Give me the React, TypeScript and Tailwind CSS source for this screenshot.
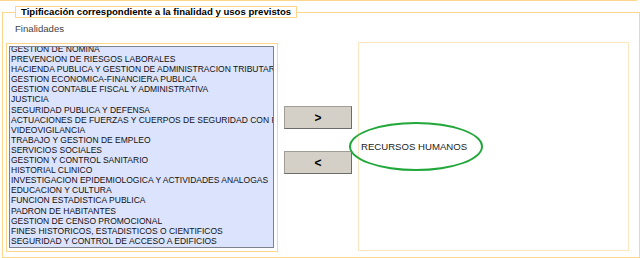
import React from "react";

const items = [
  "GESTION DE NOMINA",
  "PREVENCION DE RIESGOS LABORALES",
  "HACIENDA PUBLICA Y GESTION DE ADMINISTRACION TRIBUTARIA",
  "GESTION ECONOMICA-FINANCIERA PUBLICA",
  "GESTION CONTABLE FISCAL Y ADMINISTRATIVA",
  "JUSTICIA",
  "SEGURIDAD PUBLICA Y DEFENSA",
  "ACTUACIONES DE FUERZAS Y CUERPOS DE SEGURIDAD CON FINES POLICIALES",
  "VIDEOVIGILANCIA",
  "TRABAJO Y GESTION DE EMPLEO",
  "SERVICIOS SOCIALES",
  "GESTION Y CONTROL SANITARIO",
  "HISTORIAL CLINICO",
  "INVESTIGACION EPIDEMIOLOGICA Y ACTIVIDADES ANALOGAS",
  "EDUCACION Y CULTURA",
  "FUNCION ESTADISTICA PUBLICA",
  "PADRON DE HABITANTES",
  "GESTION DE CENSO PROMOCIONAL",
  "FINES HISTORICOS, ESTADISTICOS O CIENTIFICOS",
  "SEGURIDAD Y CONTROL DE ACCESO A EDIFICIOS",
];

export default function App() {
  return (
    <div className="w-[640px] h-[258px] bg-white overflow-hidden font-['Liberation_Sans',Arial,sans-serif] text-black">
      <div className="w-[637px] h-px bg-[#fcd68c]" />
      <fieldset className="ml-[2px] mt-[5px] w-[638px] h-[252px] border border-[#fcd68c] pl-[3px] pt-[5px] m-0">
        <legend className="ml-[9px] border border-[#fcd68c] bg-white px-[5px] text-[9.6px] leading-[10px] font-bold">
          Tipificación correspondiente a la finalidad y usos previstos
        </legend>
        <div className="pl-[9px] text-[9.6px] leading-[12px] text-[#444]">Finalidades</div>
        <div className="flex items-start mt-[8px]">
          <div className="w-[272px] h-[209px] border border-[#fcd68c] pt-[2px] pl-[2px]">
            <div className="w-[265px] h-[202px] border border-[#7d828c] bg-[#dce3fc] overflow-hidden">
              <div className="-mt-[3px] pl-px">
                {items.map((t) => (
                  <div key={t} className="text-[8.5px] leading-[10.1px] whitespace-nowrap text-[#111]">
                    {t}
                  </div>
                ))}
              </div>
            </div>
          </div>
          <div className="flex flex-col ml-[6px] mt-[63px] gap-[22px]">
            <button className="w-[68px] h-[23px] bg-[#d4d0c8] border border-[#a09c96] border-r-[#6e6c68] border-b-[#6e6c68] text-[12px] font-bold leading-none">
              &gt;
            </button>
            <button className="w-[68px] h-[23px] bg-[#d4d0c8] border border-[#a09c96] border-r-[#6e6c68] border-b-[#6e6c68] text-[12px] font-bold leading-none">
              &lt;
            </button>
          </div>
          <div className="relative ml-[6px] -mt-px w-[271px] h-[209px] border border-[#fde6c2] flex items-center pl-[2px]">
            <span className="text-[9.6px] leading-[12px] text-[#222]">RECURSOS HUMANOS</span>
            <div className="absolute left-[-10px] top-[79px] w-[134px] h-[49px] rounded-[50%] border-2 border-[#22a83a]" />
          </div>
        </div>
      </fieldset>
    </div>
  );
}
